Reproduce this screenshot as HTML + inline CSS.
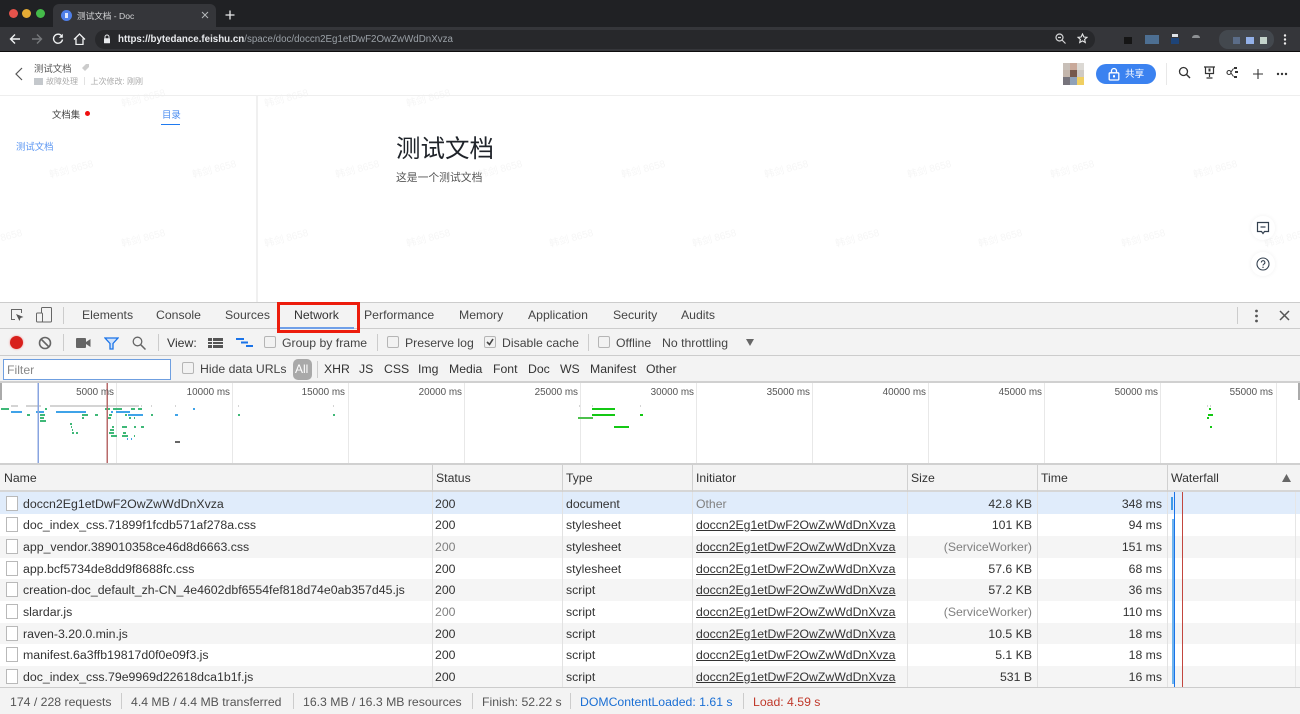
<!DOCTYPE html>
<html lang="zh"><head><meta charset="utf-8"><title>测试文档 - Doc</title>
<style>
*{box-sizing:border-box}
html,body{margin:0;padding:0}
body{width:1300px;height:714px;position:relative;overflow:hidden;background:#fff;font-family:"Liberation Sans","Noto Sans CJK SC",sans-serif;color:#333;font-size:12.25px;filter:blur(.3px)}
.a{position:absolute}
.t{position:absolute;white-space:nowrap;line-height:16px}
.wm{position:absolute;white-space:nowrap;font-size:10px;color:#f6f6f6;transform:translate(-50%,-50%) rotate(-15deg)}
.tab{position:absolute;top:307px;white-space:nowrap;line-height:16px;color:#444}
.cb{position:absolute;width:12px;height:12px;border:1px solid #b5b5b5;border-radius:2px;background:#f2f2f2}
.f{position:absolute;top:361px;line-height:16px;color:#333;white-space:nowrap}
.sep{position:absolute;width:1px;background:#ccc}
.th{position:absolute;top:470px;line-height:16px;color:#333}
.row{position:absolute;left:0;width:1300px;height:21.7px}
.row span{position:absolute;top:3px;line-height:16px;white-space:nowrap;color:#333}
.row .ic{left:6px;top:3px;width:12px;height:15px;background:#fff;border:1px solid #b9b9b9}
.row .n{left:23px;font-size:12.33px}.row .s{left:435px}.row .y{left:566px}.row .i{left:696px;text-decoration:underline}.row .z{right:268px}.row .m{right:138px}
#r1 span{top:3.5px}
.g{color:#808080!important}
.col{position:absolute;top:492px;width:1px;height:196px;background:#e2e2e2}
.hc{position:absolute;top:465px;width:1px;height:27px;background:#d0d0d0}
.ol{position:absolute;top:385px;line-height:16px;font-size:9.9px;color:#555;white-space:nowrap}
</style></head><body>

<!-- page -->
<div class="wm" style="left:143px;top:97px">韩剑 8658</div><div class="wm" style="left:286px;top:97px">韩剑 8658</div><div class="wm" style="left:428px;top:97px">韩剑 8658</div>
<div class="wm" style="left:71px;top:168px">韩剑 8658</div><div class="wm" style="left:214px;top:168px">韩剑 8658</div><div class="wm" style="left:357px;top:168px">韩剑 8658</div><div class="wm" style="left:500px;top:168px">韩剑 8658</div><div class="wm" style="left:643px;top:168px">韩剑 8658</div><div class="wm" style="left:786px;top:168px">韩剑 8658</div><div class="wm" style="left:929px;top:168px">韩剑 8658</div><div class="wm" style="left:1072px;top:168px">韩剑 8658</div><div class="wm" style="left:1215px;top:168px">韩剑 8658</div>
<div class="wm" style="left:0;top:237px">韩剑 8658</div><div class="wm" style="left:143px;top:237px">韩剑 8658</div><div class="wm" style="left:286px;top:237px">韩剑 8658</div><div class="wm" style="left:428px;top:237px">韩剑 8658</div><div class="wm" style="left:571px;top:237px">韩剑 8658</div><div class="wm" style="left:714px;top:237px">韩剑 8658</div><div class="wm" style="left:857px;top:237px">韩剑 8658</div><div class="wm" style="left:1000px;top:237px">韩剑 8658</div><div class="wm" style="left:1143px;top:237px">韩剑 8658</div><div class="wm" style="left:1286px;top:237px">韩剑 8658</div>

<div class="a" style="left:0;top:95px;width:1300px;height:1px;background:#eee"></div>
<div class="a" style="left:256px;top:96px;width:2px;height:206px;background:#f0f0f0"></div>
<svg class="a" style="left:14px;top:67px" width="10" height="14" viewBox="0 0 10 14"><path d="M8 1L2 7l6 6" fill="none" stroke="#555" stroke-width="1.2"/></svg>
<div class="t" style="left:34px;top:60.500px;font-size:9.4px;color:#555">测试文档</div>
<svg class="a" style="left:81px;top:63px" width="9" height="9" viewBox="0 0 9 9"><path d="M1 5l4-4h3v3L4 8z" fill="#ccc"/></svg>
<div class="a" style="left:34px;top:78px;width:9px;height:7px;background:#c4c8cc"></div>
<div class="t" style="left:46px;top:73.500px;font-size:8px;color:#aaa">故障处理</div>
<div class="a" style="left:84px;top:77px;width:1px;height:8px;background:#e2e2e2"></div>
<div class="t" style="left:90.500px;top:73.500px;font-size:8px;color:#aaa">上次修改: 刚刚</div>

<!-- header right -->
<svg class="a" style="left:1063px;top:63px" width="21" height="22" shape-rendering="crispEdges"><rect x="0" y="0" width="7" height="7" fill="#c8bfb8"/><rect x="7" y="0" width="7" height="7" fill="#c9a99a"/><rect x="14" y="0" width="7" height="7" fill="#dcd9d4"/><rect x="0" y="7" width="7" height="7" fill="#c4b6ac"/><rect x="7" y="7" width="7" height="7" fill="#76594c"/><rect x="14" y="7" width="7" height="7" fill="#cfcac4"/><rect x="0" y="14" width="7" height="8" fill="#77747c"/><rect x="7" y="14" width="7" height="8" fill="#8fa1b8"/><rect x="14" y="14" width="7" height="8" fill="#f0cf62"/></svg>
<div class="a" style="left:1096px;top:64px;width:60px;height:20px;border-radius:10px;background:#3b82f0"></div>
<svg class="a" style="left:1108px;top:67px" width="12" height="14" viewBox="0 0 12 14"><path d="M3.500 6V4a2.500 2.500 0 015 0v2" fill="none" stroke="#fff" stroke-width="1.300"/><rect x="1.200" y="5.800" width="9.600" height="7.200" rx="1" fill="none" stroke="#fff" stroke-width="1.300"/><rect x="5" y="8.200" width="2" height="2.200" fill="#fff"/></svg>
<div class="t" style="left:1125px;top:66.500px;font-size:9.600px;color:#fff">共享</div>
<div class="a" style="left:1166px;top:63px;width:1px;height:22px;background:#e8e8e8"></div>
<svg class="a" style="left:1178px;top:66px" width="13" height="13" viewBox="0 0 13 13"><circle cx="5.500" cy="5.500" r="4" fill="none" stroke="#333" stroke-width="1.300"/><path d="M8.500 8.500L12 12" stroke="#333" stroke-width="1.400"/></svg>
<svg class="a" style="left:1203px;top:66px" width="13" height="14" viewBox="0 0 13 14"><path d="M1 1h11M2.500 1v6.500h8V1M6.500 7.500V11M3.500 12h6" fill="none" stroke="#333" stroke-width="1.200"/><rect x="5.500" y="2.500" width="2" height="3" fill="#333"/></svg>
<svg class="a" style="left:1226px;top:66px" width="13" height="13" viewBox="0 0 13 13"><circle cx="3" cy="6.500" r="2" fill="none" stroke="#333" stroke-width="1.100"/><path d="M5 6l2.500-3.500M5 7l2.500 3.500" stroke="#333"/><rect x="8" y="1" width="3" height="2" fill="#333"/><rect x="9" y="5" width="3" height="2" fill="#333"/><rect x="8" y="10" width="3" height="2" fill="#333"/></svg>
<svg class="a" style="left:1252px;top:68px" width="12" height="12" viewBox="0 0 12 12"><path d="M6 1v10M1 6h10" stroke="#333" stroke-width="1.100"/></svg>
<svg class="a" style="left:1276px;top:72px" width="12" height="4" viewBox="0 0 12 4"><circle cx="2" cy="2" r="1.200" fill="#333"/><circle cx="6" cy="2" r="1.200" fill="#333"/><circle cx="10" cy="2" r="1.200" fill="#333"/></svg>

<!-- sidebar -->
<div class="t" style="left:52px;top:106.500px;font-size:9.400px;color:#444">文档集</div>
<div class="a" style="left:85px;top:111px;width:5px;height:5px;border-radius:50%;background:#f00f0f"></div>
<div class="t" style="left:162px;top:106.500px;font-size:9.400px;color:#4a8cf0">目录</div>
<div class="a" style="left:161px;top:124px;width:19px;height:1px;background:#1f7af0"></div>
<div class="t" style="left:16px;top:138.500px;font-size:9.400px;color:#5b96f2">测试文档</div>
<div class="t" style="left:396px;top:135px;font-size:24.500px;line-height:30px;color:#1f2329">测试文档</div>
<div class="t" style="left:396px;top:170px;font-size:10.800px;color:#555">这是一个测试文档</div>

<div class="a" style="left:1251px;top:216px;width:24px;height:24px;border-radius:50%;background:#fff;box-shadow:0 0 5px rgba(0,0,0,.06)"></div>
<svg class="a" style="left:1256px;top:221px" width="14" height="14" viewBox="0 0 14 14"><path d="M1.500 1.500h11v9H8.500L7 12.500 5.500 10.500H1.500z" fill="none" stroke="#33404f" stroke-width="1.200"/><path d="M4.500 6h5" stroke="#33404f" stroke-width="1.200"/></svg>
<div class="a" style="left:1251px;top:252px;width:24px;height:24px;border-radius:50%;background:#fff;box-shadow:0 0 5px rgba(0,0,0,.06)"></div>
<svg class="a" style="left:1256px;top:257px" width="14" height="14" viewBox="0 0 14 14"><circle cx="7" cy="7" r="6" fill="none" stroke="#33404f" stroke-width="1.100"/><path d="M5.300 5.500a1.800 1.800 0 113 1.300c-.7.500-1.300.8-1.300 1.700" fill="none" stroke="#33404f" stroke-width="1.100"/><circle cx="7" cy="10.300" r=".7" fill="#33404f"/></svg>

<!-- browser chrome -->
<div class="a" style="left:0;top:0;width:1300px;height:27px;background:#202124"></div>
<div class="a" style="left:0;top:27px;width:1300px;height:24px;background:#35363a"></div>
<div class="a" style="left:0;top:51px;width:1300px;height:1px;background:#0d0d0d"></div>
<div class="a" style="left:8.500px;top:8.500px;width:9px;height:9px;border-radius:50%;background:#e5534b"></div>
<div class="a" style="left:21.500px;top:8.500px;width:9px;height:9px;border-radius:50%;background:#e5ac35"></div>
<div class="a" style="left:35.500px;top:8.500px;width:9px;height:9px;border-radius:50%;background:#45bb4a"></div>
<div class="a" style="left:53px;top:4px;width:163px;height:23px;border-radius:6px 6px 0 0;background:#35363a"></div>
<div class="a" style="left:61px;top:10px;width:11px;height:11px;border-radius:50%;background:#4f7fe8"></div>
<div class="a" style="left:65px;top:13px;width:3px;height:5px;background:#dfe8fb"></div>
<div class="t" style="left:77px;top:8px;font-size:8.600px;color:#d4d5d7">测试文档 - Doc</div>
<svg class="a" style="left:201px;top:11px" width="8" height="8" viewBox="0 0 8 8"><path d="M1 1l6 6M7 1L1 7" stroke="#b5b7ba" stroke-width="1"/></svg>
<svg class="a" style="left:225px;top:10px" width="10" height="10" viewBox="0 0 10 10"><path d="M5 .500v9M.500 5h9" stroke="#e8e9ea" stroke-width="1.300"/></svg>
<svg class="a" style="left:9px;top:33px" width="12" height="12" viewBox="0 0 12 12"><path d="M11 6H2M6 1.500L1.500 6 6 10.500" fill="none" stroke="#f1f3f4" stroke-width="1.400"/></svg>
<svg class="a" style="left:31px;top:33px" width="12" height="12" viewBox="0 0 12 12"><path d="M1 6h9M6 1.500L10.500 6 6 10.500" fill="none" stroke="#77797c" stroke-width="1.400"/></svg>
<svg class="a" style="left:52px;top:33px" width="12" height="12" viewBox="0 0 12 12"><path d="M10 3.500A4.500 4.500 0 1010.500 6.500" fill="none" stroke="#f1f3f4" stroke-width="1.400"/><path d="M10.800 .800v4h-4z" fill="#f1f3f4"/></svg>
<svg class="a" style="left:73px;top:33px" width="13" height="12" viewBox="0 0 13 12"><path d="M1 6.500L6.500 1 12 6.500M3 5.500v6h7v-6" fill="none" stroke="#f1f3f4" stroke-width="1.300"/></svg>
<div class="a" style="left:95px;top:30px;width:1000px;height:19px;border-radius:10px;background:#27282b"></div>
<svg class="a" style="left:103px;top:34px" width="8" height="10" viewBox="0 0 8 10"><path d="M2 4.500V3a2 2 0 014 0v1.500" fill="none" stroke="#e8eaed"/><rect x="1" y="4.300" width="6" height="5" rx=".6" fill="#e8eaed"/></svg>
<div class="t" style="left:118px;top:31.500px;font-size:9.750px;font-weight:bold;color:#e8eaed;white-space:nowrap">https://bytedance.feishu.cn<span style="font-weight:normal;color:#9aa0a6">/space/doc/doccn2Eg1etDwF2OwZwWdDnXvza</span></div>
<svg class="a" style="left:1055px;top:33px" width="11" height="11" viewBox="0 0 11 11"><circle cx="4.500" cy="4.500" r="3.500" fill="none" stroke="#d4d5d7" stroke-width="1.200"/><path d="M7 7l3.500 3.500M3 4.500h3" stroke="#d4d5d7" stroke-width="1.200"/></svg>
<svg class="a" style="left:1077px;top:33px" width="11" height="11" viewBox="0 0 11 11"><path d="M5.500 1l1.400 3 3.100.300-2.400 2.100.700 3.100-2.800-1.600-2.800 1.600.700-3.100L1 4.300l3.100-.300z" fill="none" stroke="#e4e5e6" stroke-width="1.100"/></svg>
<div class="a" style="left:1124px;top:37px;width:8px;height:7px;background:#151515"></div>
<div class="a" style="left:1145px;top:35px;width:14px;height:9px;background:#4d6f92"></div>
<div class="a" style="left:1171px;top:38px;width:8px;height:6px;background:#1e4478"></div>
<div class="a" style="left:1172px;top:34px;width:6px;height:3px;background:#dfe3e8"></div>
<div class="a" style="left:1192px;top:35px;width:8px;height:3px;border-radius:3px 3px 0 0;background:#8d9093"></div>
<div class="a" style="left:1219px;top:30px;width:55px;height:19px;border-radius:9px;background:#43484e"></div>
<div class="a" style="left:1233px;top:37px;width:7px;height:7px;background:#5b6d88"></div>
<div class="a" style="left:1246px;top:37px;width:8px;height:7px;background:#93b1e8"></div>
<div class="a" style="left:1260px;top:37px;width:7px;height:7px;background:#c4d4cc"></div>
<svg class="a" style="left:1283px;top:34px" width="4" height="11"><circle cx="2" cy="1.500" r="1.200" fill="#eee"/><circle cx="2" cy="5.500" r="1.200" fill="#eee"/><circle cx="2" cy="9.500" r="1.200" fill="#eee"/></svg>

<!-- devtools tabs -->
<div class="a" style="left:0;top:302px;width:1300px;height:27px;background:#f3f3f3;border-top:1px solid #ccc;border-bottom:1px solid #ccc"></div>
<svg class="a" style="left:10px;top:308px" width="15" height="15" viewBox="0 0 15 15"><path d="M5 11.500H1.500v-10h10V5" fill="none" stroke="#666" stroke-width="1"/><path d="M6 6l7.500 3-3 1-1 3z" fill="#555"/></svg>
<svg class="a" style="left:36px;top:307px" width="16" height="16" viewBox="0 0 16 16"><rect x="5.500" y=".500" width="10" height="14.500" rx="1" fill="none" stroke="#666"/><rect x=".500" y="6" width="6" height="9" rx="1" fill="#f3f3f3" stroke="#666"/></svg>
<div class="sep" style="left:63px;top:307px;height:17px"></div>
<div class="tab" style="left:82px">Elements</div>
<div class="tab" style="left:156px">Console</div>
<div class="tab" style="left:225px">Sources</div>
<div class="tab" style="left:294px;color:#333">Network</div>
<div class="tab" style="left:364px">Performance</div>
<div class="tab" style="left:459px">Memory</div>
<div class="tab" style="left:528px">Application</div>
<div class="tab" style="left:613px">Security</div>
<div class="tab" style="left:681px">Audits</div>
<div class="sep" style="left:1237px;top:307px;height:17px"></div>
<svg class="a" style="left:1254px;top:309px" width="5" height="14"><circle cx="2.500" cy="2" r="1.400" fill="#555"/><circle cx="2.500" cy="7" r="1.400" fill="#555"/><circle cx="2.500" cy="12" r="1.400" fill="#555"/></svg>
<svg class="a" style="left:1279px;top:310px" width="11" height="11" viewBox="0 0 11 11"><path d="M1 1l9 9M10 1l-9 9" stroke="#555" stroke-width="1.500"/></svg>

<!-- toolbar -->
<div class="a" style="left:0;top:329px;width:1300px;height:27px;background:#f3f3f3;border-bottom:1px solid #ccc"></div>
<div class="a" style="left:10px;top:336px;width:13px;height:13px;border-radius:50%;background:#d8201c;box-shadow:0 0 2px #e88"></div>
<svg class="a" style="left:38px;top:336px" width="14" height="14" viewBox="0 0 14 14"><circle cx="7" cy="7" r="5.500" fill="none" stroke="#666" stroke-width="1.600"/><path d="M3 3l8 8" stroke="#666" stroke-width="1.600"/></svg>
<div class="sep" style="left:63px;top:334px;height:17px"></div>
<svg class="a" style="left:76px;top:338px" width="15" height="10" viewBox="0 0 15 10"><rect x="0" y="0" width="10" height="10" rx="1" fill="#666"/><path d="M10 4l4.500-3v8L10 6z" fill="#666"/></svg>
<svg class="a" style="left:104px;top:337px" width="15" height="13" viewBox="0 0 15 13"><path d="M1 1h13L9 6.500V12H6V6.500z" fill="#cfe2fb" stroke="#1a73e8" stroke-width="1.300"/></svg>
<svg class="a" style="left:132px;top:336px" width="14" height="14" viewBox="0 0 14 14"><circle cx="5.500" cy="5.500" r="4.300" fill="none" stroke="#666" stroke-width="1.300"/><path d="M8.700 8.700L13.500 13.500" stroke="#666" stroke-width="1.500"/></svg>
<div class="sep" style="left:158px;top:334px;height:17px"></div>
<div class="f" style="left:167px;top:335px">View:</div>
<svg class="a" style="left:208px;top:338px" width="15" height="10" viewBox="0 0 15 10"><rect x="0" y="0" width="4" height="3" fill="#555"/><rect x="5" y="0" width="10" height="3" fill="#555"/><rect x="0" y="4" width="4" height="2" fill="#555"/><rect x="5" y="4" width="10" height="2" fill="#555"/><rect x="0" y="7" width="4" height="3" fill="#555"/><rect x="5" y="7" width="10" height="3" fill="#555"/></svg>
<svg class="a" style="left:236px;top:338px" width="17" height="11" viewBox="0 0 17 11"><rect x="0" y="0" width="8" height="2" fill="#1a73e8"/><rect x="5" y="3.500" width="7" height="2" fill="#1a73e8"/><rect x="10" y="7" width="7" height="2" fill="#1a73e8"/></svg>
<div class="cb" style="left:264px;top:336px"></div>
<div class="f" style="left:282px;top:335px;color:#444">Group by frame</div>
<div class="sep" style="left:377px;top:334px;height:17px"></div>
<div class="cb" style="left:387px;top:336px"></div>
<div class="f" style="left:405px;top:335px;color:#444">Preserve log</div>
<div class="cb" style="left:484px;top:336px"></div>
<svg class="a" style="left:485px;top:337px" width="10" height="10" viewBox="0 0 10 10"><path d="M2 5l2.500 2.500L8 2" fill="none" stroke="#444" stroke-width="1.600"/></svg>
<div class="f" style="left:502px;top:335px;color:#444">Disable cache</div>
<div class="sep" style="left:588px;top:334px;height:17px"></div>
<div class="cb" style="left:598px;top:336px"></div>
<div class="f" style="left:616px;top:335px;color:#444">Offline</div>
<div class="f" style="left:662px;top:335px;color:#444">No throttling</div>
<svg class="a" style="left:746px;top:339px" width="8" height="7"><path d="M0 0h8L4 7z" fill="#666"/></svg>

<!-- filter bar -->
<div class="a" style="left:0;top:356px;width:1300px;height:26px;background:#f3f3f3"></div>
<div class="a" style="left:3px;top:359px;width:168px;height:21px;background:#fff;border:1px solid #6f9fe0"></div>
<div class="t" style="left:7px;top:362px;color:#888">Filter</div>
<div class="cb" style="left:182px;top:362px"></div>
<div class="f" style="left:200px;color:#444">Hide data URLs</div>
<div class="a" style="left:293px;top:359px;width:19px;height:21px;border-radius:5px;background:#a9a9a9"></div>
<div class="f" style="left:295px;color:#fff;font-size:12px">All</div>
<div class="sep" style="left:317px;top:361px;height:17px"></div>
<div class="f" style="left:324px">XHR</div><div class="f" style="left:359px">JS</div><div class="f" style="left:384px">CSS</div><div class="f" style="left:418px">Img</div><div class="f" style="left:449px">Media</div><div class="f" style="left:493px">Font</div><div class="f" style="left:528px">Doc</div><div class="f" style="left:560px">WS</div><div class="f" style="left:590px">Manifest</div><div class="f" style="left:646px">Other</div>

<!-- overview -->
<div class="a" style="left:0;top:381px;width:1300px;height:2px;background:#d0d0d0"></div>
<div class="a" style="left:0;top:383px;width:1300px;height:80px;background:#fff"></div>
<svg class="a" style="left:0;top:383px" width="1300" height="80" shape-rendering="crispEdges">
<g fill="#e8e8e8"><rect x="116" width="1" height="80"/><rect x="232" width="1" height="80"/><rect x="348" width="1" height="80"/><rect x="464" width="1" height="80"/><rect x="580" width="1" height="80"/><rect x="696" width="1" height="80"/><rect x="812" width="1" height="80"/><rect x="928" width="1" height="80"/><rect x="1044" width="1" height="80"/><rect x="1160" width="1" height="80"/><rect x="1276" width="1" height="80"/></g>
<rect x="0" y="0" width="2" height="17" fill="#aaa"/><rect x="1298" y="0" width="2" height="17" fill="#aaa"/>
<g fill="#d4d4d4"><rect x="11" y="22" width="7" height="2"/><rect x="26" y="22" width="15" height="2"/><rect x="50" y="22" width="89" height="2"/><rect x="141" y="22" width="1" height="2"/><rect x="151" y="22" width="1" height="2"/><rect x="175" y="22" width="1" height="2"/><rect x="238" y="22" width="1" height="2"/><rect x="333" y="22" width="1" height="2"/><rect x="579" y="22" width="1" height="2"/><rect x="592" y="22" width="1" height="2"/><rect x="640" y="22" width="1" height="2"/><rect x="1207" y="22" width="1" height="2"/><rect x="1210" y="22" width="1" height="2"/></g>
<g fill="#3fb878"><rect x="1" y="25" width="8" height="2"/><rect x="45" y="25" width="2" height="2"/><rect x="105" y="25" width="5" height="2"/><rect x="113" y="25" width="9" height="2"/><rect x="131" y="25" width="4" height="2"/><rect x="138" y="25" width="4" height="2"/><rect x="27" y="31" width="3" height="2"/><rect x="40" y="31" width="5" height="2"/><rect x="82" y="31" width="6" height="2"/><rect x="95" y="31" width="3" height="2"/><rect x="109" y="31" width="3" height="2"/><rect x="125" y="31" width="2" height="2"/><rect x="151" y="31" width="2" height="2"/><rect x="238" y="31" width="2" height="2"/><rect x="333" y="31" width="2" height="2"/><rect x="40" y="34" width="4" height="2"/><rect x="82" y="34" width="2" height="2"/><rect x="107" y="34" width="4" height="2"/><rect x="129" y="34" width="2" height="2"/><rect x="134" y="34" width="1" height="2"/><rect x="40" y="37" width="6" height="2"/><rect x="70" y="40" width="2" height="2"/><rect x="71" y="43" width="1" height="2"/><rect x="112" y="43" width="2" height="2"/><rect x="122" y="43" width="5" height="2"/><rect x="134" y="43" width="2" height="2"/><rect x="141" y="43" width="3" height="2"/><rect x="72" y="46" width="1" height="2"/><rect x="110" y="46" width="4" height="2"/><rect x="72" y="49" width="2" height="2"/><rect x="76" y="49" width="2" height="2"/><rect x="109" y="49" width="5" height="2"/><rect x="123" y="49" width="3" height="2"/><rect x="111" y="52" width="6" height="2"/><rect x="122" y="52" width="6" height="2"/><rect x="134" y="52" width="1" height="2"/></g>
<g fill="#3fa3e8"><rect x="193" y="25" width="2" height="2"/><rect x="11" y="28" width="11" height="2"/><rect x="36" y="28" width="8" height="2"/><rect x="56" y="28" width="30" height="2"/><rect x="111" y="28" width="2" height="2"/><rect x="116" y="28" width="14" height="2"/><rect x="128" y="31" width="15" height="2"/><rect x="175" y="31" width="3" height="2"/><rect x="127" y="55" width="1" height="2"/><rect x="131" y="55" width="1" height="2"/></g>
<rect x="175" y="58" width="5" height="2" fill="#666"/>
<g fill="#14c814"><rect x="592" y="25" width="23" height="2"/><rect x="592" y="31" width="23" height="2"/><rect x="578" y="34" width="15" height="2" fill="#4cc04c"/><rect x="614" y="43" width="15" height="2"/><rect x="640" y="31" width="3" height="2"/><rect x="1209" y="25" width="2" height="2"/><rect x="1208" y="31" width="5" height="2"/><rect x="1207" y="34" width="2" height="2"/><rect x="1210" y="43" width="2" height="2"/></g>
<rect x="37.500" y="0" width="1.500" height="80" fill="#88a4e0"/><rect x="106.500" y="0" width="1.500" height="80" fill="#b86a6a"/>
</svg>
<div class="ol" style="right:1186px">5000 ms</div><div class="ol" style="right:1070px">10000 ms</div><div class="ol" style="right:955px">15000 ms</div><div class="ol" style="right:838px">20000 ms</div><div class="ol" style="right:722px">25000 ms</div><div class="ol" style="right:606px">30000 ms</div><div class="ol" style="right:490px">35000 ms</div><div class="ol" style="right:374px">40000 ms</div><div class="ol" style="right:258px">45000 ms</div><div class="ol" style="right:142px">50000 ms</div><div class="ol" style="right:27px">55000 ms</div>
<div class="a" style="left:0;top:463px;width:1300px;height:2px;background:#d0d0d0"></div>

<!-- table header -->
<div class="a" style="left:0;top:465px;width:1300px;height:27px;background:#f3f3f3;border-bottom:2px solid #d6d6d6"></div>
<div class="th" style="left:4px">Name</div><div class="th" style="left:436px">Status</div><div class="th" style="left:566px">Type</div><div class="th" style="left:696px">Initiator</div><div class="th" style="left:911px">Size</div><div class="th" style="left:1041px">Time</div><div class="th" style="left:1171px">Waterfall</div>
<svg class="a" style="left:1282px;top:474px" width="9" height="8"><path d="M4.500 0L9 8H0z" fill="#666"/></svg>

<!-- rows -->
<div class="row" id="r1" style="top:492px;height:22.200px;background:#e0ecfb"><span class="ic"></span><span class="n">doccn2Eg1etDwF2OwZwWdDnXvza</span><span class="s">200</span><span class="y">document</span><span class="g" style="left:696px">Other</span><span class="z">42.8 KB</span><span class="m">348 ms</span></div>
<div class="row" style="top:514.200px;background:#fff"><span class="ic"></span><span class="n">doc_index_css.71899f1fcdb571af278a.css</span><span class="s">200</span><span class="y">stylesheet</span><span class="i">doccn2Eg1etDwF2OwZwWdDnXvza</span><span class="z">101 KB</span><span class="m">94 ms</span></div>
<div class="row" style="top:535.900px;background:#f5f5f5"><span class="ic"></span><span class="n">app_vendor.389010358ce46d8d6663.css</span><span class="s g">200</span><span class="y">stylesheet</span><span class="i">doccn2Eg1etDwF2OwZwWdDnXvza</span><span class="z g">(ServiceWorker)</span><span class="m">151 ms</span></div>
<div class="row" style="top:557.600px;background:#fff"><span class="ic"></span><span class="n">app.bcf5734de8dd9f8688fc.css</span><span class="s">200</span><span class="y">stylesheet</span><span class="i">doccn2Eg1etDwF2OwZwWdDnXvza</span><span class="z">57.6 KB</span><span class="m">68 ms</span></div>
<div class="row" style="top:579.300px;background:#f5f5f5"><span class="ic"></span><span class="n">creation-doc_default_zh-CN_4e4602dbf6554fef818d74e0ab357d45.js</span><span class="s">200</span><span class="y">script</span><span class="i">doccn2Eg1etDwF2OwZwWdDnXvza</span><span class="z">57.2 KB</span><span class="m">36 ms</span></div>
<div class="row" style="top:601px;background:#fff"><span class="ic"></span><span class="n">slardar.js</span><span class="s g">200</span><span class="y">script</span><span class="i">doccn2Eg1etDwF2OwZwWdDnXvza</span><span class="z g">(ServiceWorker)</span><span class="m">110 ms</span></div>
<div class="row" style="top:622.700px;background:#f5f5f5"><span class="ic"></span><span class="n">raven-3.20.0.min.js</span><span class="s">200</span><span class="y">script</span><span class="i">doccn2Eg1etDwF2OwZwWdDnXvza</span><span class="z">10.5 KB</span><span class="m">18 ms</span></div>
<div class="row" style="top:644.400px;background:#fff"><span class="ic"></span><span class="n">manifest.6a3ffb19817d0f0e09f3.js</span><span class="s">200</span><span class="y">script</span><span class="i">doccn2Eg1etDwF2OwZwWdDnXvza</span><span class="z">5.1 KB</span><span class="m">18 ms</span></div>
<div class="row" style="top:666.100px;background:#f5f5f5"><span class="ic"></span><span class="n">doc_index_css.79e9969d22618dca1b1f.js</span><span class="s">200</span><span class="y">script</span><span class="i">doccn2Eg1etDwF2OwZwWdDnXvza</span><span class="z">531 B</span><span class="m">16 ms</span></div>

<div class="hc" style="left:432px"></div><div class="hc" style="left:562px"></div><div class="hc" style="left:692px"></div><div class="hc" style="left:907px"></div><div class="hc" style="left:1037px"></div><div class="hc" style="left:1167px"></div>
<div class="col" style="left:432px"></div><div class="col" style="left:562px"></div><div class="col" style="left:692px"></div><div class="col" style="left:907px"></div><div class="col" style="left:1037px"></div><div class="col" style="left:1167px"></div><div class="col" style="left:1295px;background:#e6e6e6"></div>

<!-- waterfall -->
<div class="a" style="left:1171px;top:497px;width:2px;height:13px;background:#3f9be8"></div>
<div class="a" style="left:1172px;top:519px;width:2.500px;height:165px;background:#6fb4ee"></div>
<div class="a" style="left:1174px;top:492px;width:1px;height:196px;background:#1a73e8"></div>
<div class="a" style="left:1182px;top:492px;width:1px;height:196px;background:#c2463e"></div>

<!-- status bar -->
<div class="a" style="left:0;top:687px;width:1300px;height:27px;background:#f3f3f3;border-top:1px solid #ccc"></div>
<div class="t" style="left:10px;top:694px;color:#555">174 / 228 requests</div>
<div class="sep" style="left:121px;top:693px;height:16px"></div>
<div class="t" style="left:131px;top:694px;color:#555">4.4 MB / 4.4 MB transferred</div>
<div class="sep" style="left:293px;top:693px;height:16px"></div>
<div class="t" style="left:303px;top:694px;color:#555">16.3 MB / 16.3 MB resources</div>
<div class="sep" style="left:472px;top:693px;height:16px"></div>
<div class="t" style="left:482px;top:694px;color:#555">Finish: 52.22 s</div>
<div class="sep" style="left:570px;top:693px;height:16px"></div>
<div class="t" style="left:580px;top:694px;color:#1a6fd4">DOMContentLoaded: 1.61 s</div>
<div class="sep" style="left:743px;top:693px;height:16px"></div>
<div class="t" style="left:753px;top:694px;color:#c0392b">Load: 4.59 s</div>

<!-- annotation box + active tab underline on top -->
<div class="a" style="left:280px;top:327px;width:74px;height:2px;background:#6f9fe8"></div>
<div class="a" style="left:276.500px;top:302px;width:83px;height:31px;border:3px solid #ec1c0c"></div>
</body></html>
